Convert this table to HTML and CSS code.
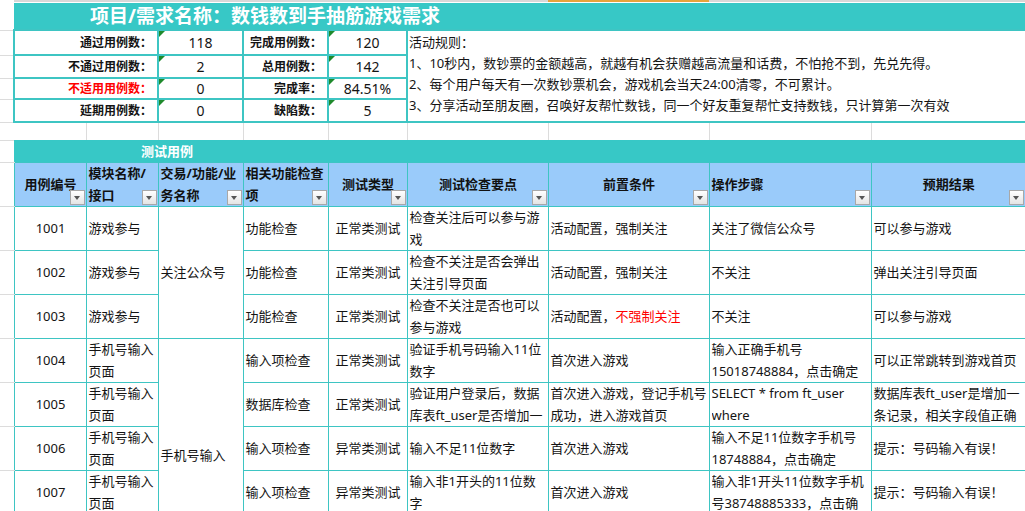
FILE: index.html
```html
<!DOCTYPE html>
<html lang="zh-CN">
<head>
<meta charset="utf-8">
<title>测试用例 - 数钱数到手抽筋游戏需求</title>
<link rel="stylesheet" href="styles.css">
</head>
<body>
<table class="sheet">
  <colgroup>
    <col class="c-a"><col class="c-b"><col class="c-c"><col class="c-d"><col class="c-e">
    <col class="c-f"><col class="c-g"><col class="c-h"><col class="c-i"><col class="c-j">
  </colgroup>
  <tbody>
    <tr class="r-top">
      <td class="rh rh-first"></td>
      <td class="top" colspan="6"></td>
      <td class="top sel"></td>
      <td class="top" colspan="2"></td>
    </tr>
    <tr class="r-title">
      <td class="rh"></td>
      <td class="title" colspan="9">项目/需求名称：数钱数到手抽筋游戏需求</td>
    </tr>

    <tr class="r-s1">
      <td class="rh"></td>
      <td class="lbl" colspan="2">通过用例数：</td>
      <td class="val">118</td>
      <td class="lbl">完成用例数：</td>
      <td class="val">120</td>
      <td class="rules" colspan="4" rowspan="4">
        <p>活动规则：</p>
        <p>1、10秒内，数钞票的金额越高，就越有机会获赠越高流量和话费，不怕抢不到，先兑先得。</p>
        <p>2、每个用户每天有一次数钞票机会，游戏机会当天24:00清零，不可累计。</p>
        <p>3、分享活动至朋友圈，召唤好友帮忙数钱，同一个好友重复帮忙支持数钱，只计算第一次有效</p>
      </td>
    </tr>
    <tr class="r-s2">
      <td class="rh"></td>
      <td class="lbl" colspan="2">不通过用例数：</td>
      <td class="val">2</td>
      <td class="lbl">总用例数：</td>
      <td class="val">142</td>
    </tr>
    <tr class="r-s3">
      <td class="rh"></td>
      <td class="lbl warn" colspan="2">不适用用例数：</td>
      <td class="val">0</td>
      <td class="lbl">完成率：</td>
      <td class="val">84.51%</td>
    </tr>
    <tr class="r-s4">
      <td class="rh"></td>
      <td class="lbl" colspan="2">延期用例数：</td>
      <td class="val">0</td>
      <td class="lbl">缺陷数：</td>
      <td class="val">5</td>
    </tr>

    <tr class="r-gap">
      <td class="rh"></td>
      <td class="gap"></td><td class="gap"></td><td class="gap"></td><td class="gap"></td><td class="gap"></td>
      <td class="gap"></td><td class="gap"></td><td class="gap"></td><td class="gap gap-last"></td>
    </tr>

    <tr class="r-band">
      <td class="rh"></td>
      <td class="band" colspan="9">测试用例</td>
    </tr>

    <tr class="r-head">
      <td class="rh"></td>
      <th class="ctr">用例编号<i class="flt"></i></th>
      <th>模块名称/接口<i class="flt"></i></th>
      <th>交易/功能/业务名称<i class="flt"></i></th>
      <th>相关功能检查项<i class="flt"></i></th>
      <th class="ctr">测试类型<i class="flt"></i></th>
      <th class="ctr">测试检查要点<i class="flt"></i></th>
      <th class="ctr">前置条件<i class="flt"></i></th>
      <th>操作步骤<i class="flt"></i></th>
      <th class="ctr last">预期结果<i class="flt"></i></th>
    </tr>

    <tr class="r-data">
      <td class="rh"></td>
      <td class="id">1001</td>
      <td>游戏参与</td>
      <td class="merge" rowspan="3">关注公众号</td>
      <td>功能检查</td>
      <td class="ctr">正常类测试</td>
      <td>检查关注后可以参与游戏</td>
      <td>活动配置，强制关注</td>
      <td>关注了微信公众号</td>
      <td class="last">可以参与游戏</td>
    </tr>
    <tr class="r-data">
      <td class="rh"></td>
      <td class="id">1002</td>
      <td>游戏参与</td>
      <td>功能检查</td>
      <td class="ctr">正常类测试</td>
      <td>检查不关注是否会弹出关注引导页面</td>
      <td>活动配置，强制关注</td>
      <td>不关注</td>
      <td class="last">弹出关注引导页面</td>
    </tr>
    <tr class="r-data">
      <td class="rh"></td>
      <td class="id">1003</td>
      <td>游戏参与</td>
      <td>功能检查</td>
      <td class="ctr">正常类测试</td>
      <td>检查不关注是否也可以参与游戏</td>
      <td>活动配置，<span class="red">不强制关注</span></td>
      <td>不关注</td>
      <td class="last">可以参与游戏</td>
    </tr>
    <tr class="r-data">
      <td class="rh"></td>
      <td class="id">1004</td>
      <td>手机号输入页面</td>
      <td class="merge" rowspan="5">手机号输入</td>
      <td>输入项检查</td>
      <td class="ctr">正常类测试</td>
      <td>验证手机号码输入11位数字</td>
      <td>首次进入游戏</td>
      <td>输入正确手机号15018748884，点击确定</td>
      <td class="last">可以正常跳转到游戏首页</td>
    </tr>
    <tr class="r-data">
      <td class="rh"></td>
      <td class="id">1005</td>
      <td>手机号输入页面</td>
      <td>数据库检查</td>
      <td class="ctr">正常类测试</td>
      <td><div class="clip">验证用户登录后，数据库表ft_user是否增加一条记录</div></td>
      <td>首次进入游戏，登记手机号成功，进入游戏首页</td>
      <td><div class="clip">SELECT * from ft_user where phone='15018748884'</div></td>
      <td class="last">数据库表ft_user是增加一条记录，相关字段值正确</td>
    </tr>
    <tr class="r-data">
      <td class="rh"></td>
      <td class="id">1006</td>
      <td>手机号输入页面</td>
      <td>输入项检查</td>
      <td class="ctr">异常类测试</td>
      <td>输入不足11位数字</td>
      <td>首次进入游戏</td>
      <td>输入不足11位数字手机号18748884，点击确定</td>
      <td class="last">提示：号码输入有误！</td>
    </tr>
    <tr class="r-data">
      <td class="rh"></td>
      <td class="id">1007</td>
      <td>手机号输入页面</td>
      <td>输入项检查</td>
      <td class="ctr">异常类测试</td>
      <td>输入非1开头的11位数字</td>
      <td>首次进入游戏</td>
      <td><div class="clip">输入非1开头11位数字手机号38748885333，点击确定</div></td>
      <td class="last">提示：号码输入有误！</td>
    </tr>
    <tr class="r-data r-tall">
      <td class="rh"></td>
      <td class="id">1008</td>
      <td>手机号输入页面</td>
      <td>输入项检查</td>
      <td class="ctr">异常类测试</td>
      <td>输入超过11位数字</td>
      <td>首次进入游戏</td>
      <td>输入12位数字手机号，点击确定</td>
      <td class="last">提示：号码输入有误！</td>
    </tr>
  </tbody>
</table>
</body>
</html>
```

FILE: styles.css
```css
html, body {
  margin: 0;
  padding: 0;
  overflow: hidden;
  background: #ffffff;
}

body {
  font-family: "Noto Sans", "Noto Sans CJK SC", sans-serif;
  color: #141414;
}

.sheet {
  border-collapse: collapse;
  table-layout: fixed;
  width: 1025px;
}

.c-a { width: 14px; }
.c-b { width: 72px; }
.c-c { width: 72px; }
.c-d { width: 85px; }
.c-e { width: 85px; }
.c-f { width: 79px; }
.c-g { width: 141px; }
.c-h { width: 161px; }
.c-i { width: 162px; }
.c-j { width: 154px; }

td, th {
  padding: 0;
  margin: 0;
  overflow: hidden;
}

/* row heights */
.r-top   { height: 3px; }
.r-title { height: 27px; }
.r-s1    { height: 25px; }
.r-s2    { height: 23px; }
.r-s3    { height: 21px; }
.r-s4    { height: 23px; }
.r-gap   { height: 18px; }
.r-band  { height: 22px; }
.r-head  { height: 44px; }
.r-data  { height: 44px; }
.r-tall  { height: 58px; }

/* row-header column (A) gridlines */
.rh {
  border-bottom: 1px solid #dcdcdc;
}
.rh-first {
  border-bottom: none;
}

/* top strip */
.top {
  background: linear-gradient(#d8d8d8 0 2px, #ffffff 2px);
}
.top.sel {
  background: linear-gradient(#e7a43c 0 2px, #ffffff 2px);
}

/* title band */
.title {
  background: #37c8c6;
  color: #ffffff;
  font-size: 19px;
  font-weight: 700;
  line-height: 26px;
  padding-left: 76px;
  white-space: nowrap;
  vertical-align: middle;
}

/* summary block */
.lbl, .val, .rules {
  border: 2px solid #3ec5c3;
}
.lbl {
  font-size: 12px;
  font-weight: 700;
  text-align: right;
  padding-right: 5px;
  line-height: 18px;
  white-space: nowrap;
  vertical-align: middle;
}
.lbl.warn {
  color: #ff0000;
}
.val {
  position: relative;
  font-size: 14px;
  text-align: center;
  line-height: 18px;
  vertical-align: middle;
}
.val::before {
  content: "";
  position: absolute;
  top: 0;
  left: 0;
  border-top: 6px solid #1f8a2c;
  border-right: 6px solid transparent;
}
.rules {
  border-right: none;
  font-size: 13px;
  line-height: 21px;
  vertical-align: top;
  padding: 1px 0 0 1px;
  white-space: nowrap;
}
.rules p {
  margin: 0;
}

/* empty gap row gridlines */
.gap {
  border-right: 1px solid #dcdcdc;
}
.gap-last {
  border-right: none;
}

/* section band */
.band {
  background: #37c8c6;
  color: #ffffff;
  font-size: 13px;
  font-weight: 700;
  line-height: 22px;
  padding-left: 127px;
  vertical-align: middle;
  white-space: nowrap;
}

/* header row */
.r-head th {
  position: relative;
  background: #9acbfa;
  border: 1px solid #3ec5c3;
  font-size: 13px;
  font-weight: 700;
  line-height: 21.5px;
  text-align: left;
  vertical-align: middle;
  padding: 0 1px 0 2px;
  color: #111111;
}
.r-head th.ctr {
  text-align: center;
}
.r-head th.last {
  border-right: none;
}
.flt {
  position: absolute;
  right: 1px;
  bottom: 1px;
  width: 13px;
  height: 13px;
  border: 1px solid #a8a8a8;
  background: linear-gradient(#ffffff, #e4e4e4);
}
.flt::after {
  content: "";
  position: absolute;
  left: 3px;
  top: 5px;
  border-left: 3.5px solid transparent;
  border-right: 3.5px solid transparent;
  border-top: 4px solid #555555;
}

/* data rows */
.r-data td:not(.rh) {
  border: 1px solid #3ec5c3;
  font-size: 13px;
  line-height: 21.5px;
  padding: 0 1px 0 2px;
  vertical-align: middle;
  text-align: left;
}
.r-data td.last {
  border-right: none;
}
.r-data td.id {
  text-align: center;
}
.r-data td.ctr {
  text-align: center;
}
.clip {
  max-height: 43px;
  overflow: hidden;
}
.red {
  color: #ff0000;
}
```
